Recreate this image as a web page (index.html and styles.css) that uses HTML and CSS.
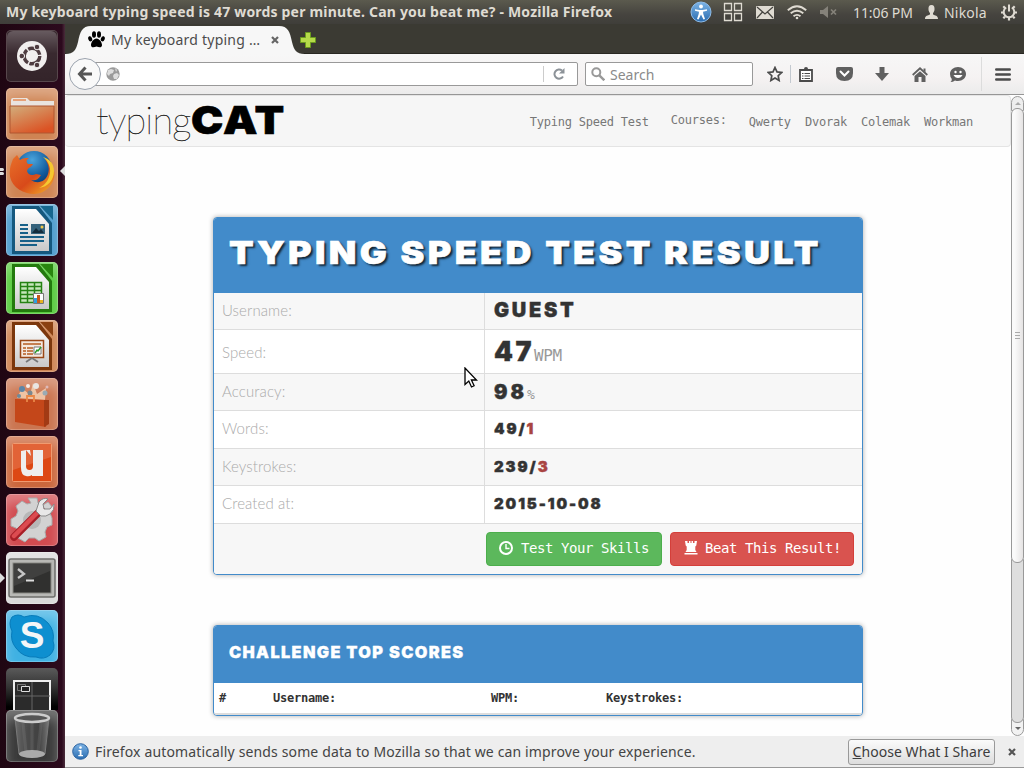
FILE: index.html
```html
<!DOCTYPE html>
<html lang="en">
<head>
<meta charset="utf-8">
<title>My keyboard typing speed is 47 words per minute. Can you beat me?</title>
<link rel="stylesheet" href="styles.css">
</head>
<body>
<svg width="0" height="0" class="defs">
  <defs>
    <linearGradient id="gloss" x1="0" y1="0" x2="0" y2="1"><stop offset="0" stop-color="#fff" stop-opacity=".5"/><stop offset=".45" stop-color="#fff" stop-opacity=".05"/><stop offset="1" stop-color="#fff" stop-opacity="0"/></linearGradient>
    <linearGradient id="folder" x1="0" y1="0" x2=".6" y2="1"><stop offset="0" stop-color="#d2ae7c"/><stop offset="1" stop-color="#db5324"/></linearGradient>
    <linearGradient id="paper" x1="0" y1="0" x2="0" y2="1"><stop offset="0" stop-color="#fff"/><stop offset="1" stop-color="#c9c9c9"/></linearGradient>
    <linearGradient id="glass" x1="0" y1="0" x2="1" y2="0"><stop offset="0" stop-color="#777"/><stop offset=".3" stop-color="#555"/><stop offset=".7" stop-color="#444"/><stop offset="1" stop-color="#888"/></linearGradient>
    <radialGradient id="globe" cx=".45" cy=".25" r=".8"><stop offset="0" stop-color="#4aa4dc"/><stop offset=".6" stop-color="#125a9c"/><stop offset="1" stop-color="#0a2f63"/></radialGradient>
    <linearGradient id="fox" x1="0" y1="0" x2="1" y2="1"><stop offset="0" stop-color="#e8702a"/><stop offset=".55" stop-color="#d84a1a"/><stop offset="1" stop-color="#f5b52a"/></linearGradient>
    <linearGradient id="access" x1="0" y1="0" x2="0" y2="1"><stop offset="0" stop-color="#7db4e6"/><stop offset="1" stop-color="#2a6cb0"/></linearGradient>
  </defs>
</svg>
<div class="desktop">
  <header class="panel-bar">
    <span class="window-title">My keyboard typing speed is 47 words per minute. Can you beat me? - Mozilla Firefox</span>
    <div class="tray">
      <svg width="22" height="22" viewBox="0 0 22 22"><circle cx="11" cy="11" r="10" fill="url(#access)" stroke="#8fbdea"/><circle cx="11" cy="5.500" r="1.900" fill="#fff"/><path d="M5 8.200l4.500.8h3l4.500-.8v1.600l-4 .9.3 2.300 1.700 5-1.500.5-2.500-5-2.500 5-1.500-.5 1.700-5 .3-2.300-4-.9z" fill="#fff"/></svg>
      <svg class="t-grid" width="20" height="20" viewBox="0 0 20 20" fill="none" stroke="#dfdbd2" stroke-width="1.300"><path d="M1.500 1.500h7v7h-7zM11.500 1.500h7v7h-7zM1.500 11.500h7v7h-7zM11.500 11.500h7v7h-7z"/></svg>
      <svg class="t-mail" width="18" height="13" viewBox="0 0 18 13"><rect width="18" height="13" rx="1" fill="#dfdbd2"/><path d="M1 1l8 7 8-7M1 12l5.500-6M17 12l-5.500-6" fill="none" stroke="#45443f" stroke-width="1.200"/></svg>
      <svg class="t-wifi" width="20" height="15" viewBox="0 0 20 15" fill="none" stroke="#dfdbd2" stroke-width="1.900"><path d="M.8 5.300q9.200-8 18.400 0M3.700 8.300q6.300-5 12.600 0M6.500 11.200q3.500-2.600 7 0"/><circle cx="10" cy="13" r="1.300" fill="#dfdbd2" stroke="none"/></svg>
      <svg class="t-mute" width="18" height="12" viewBox="0 0 18 12"><path d="M0 4h3l5-4v12l-5-4H0z" fill="#85827a"/><path d="M11 3.500l5 5m0-5l-5 5" stroke="#85827a" stroke-width="1.700"/></svg>
      <span class="clock">11:06 PM</span>
      <svg class="t-user" width="13" height="14" viewBox="0 0 13 14"><path d="M6.500 0C4 0 3.300 2 3.500 4.500c.1 1.700.8 2.800 1.500 3.500v1.500C3 10.500 0 10.500 0 14h13c0-3.500-3-3.500-5-4.500V8c.7-.7 1.400-1.800 1.500-3.500C9.700 2 9 0 6.500 0z" fill="#dfdbd2"/></svg>
      <span class="user">Nikola</span>
      <svg class="t-gear" width="18" height="18" viewBox="0 0 18 18" fill="none" stroke="#dfdbd2"><path d="M6.200 4.500a5.300 5.300 0 1 0 5.600 0M9 1.500v7" stroke-width="2"/><path d="M3.300 3.300l1.700 1.700M14.700 3.300L13 5M1 9.500h2.500M14.500 9.500H17M3.300 15.300L5 13.600M14.700 15.300L13 13.600M9 14.500V17.500" stroke-width="2.200"/></svg>
    </div>
  </header>

  <div class="workspace">
    <nav class="launcher">
      <div class="tile t-dash"><svg viewBox="0 0 52 52"><rect x="1" y="1" width="50" height="50" rx="6" fill="url(#gloss)" opacity=".5"/><circle cx="26" cy="26" r="15" fill="#f1efee"/><circle cx="26" cy="26" r="7.800" fill="none" stroke="#4e3c40" stroke-width="3.400" stroke-dasharray="14.800 1.500"/><g fill="#4e3c40" stroke="#f1efee" stroke-width="1"><circle cx="15.800" cy="26" r="2.800"/><circle cx="31" cy="17" r="2.800"/><circle cx="31" cy="35" r="2.800"/></g></svg></div>
      <div class="tile t-files"><svg viewBox="0 0 52 52"><path d="M5 42V12q0-2 2-2h14l3 3h24v29z" fill="#e9e4df"/><path d="M7 12h13" stroke="#e58b55" stroke-width="1.500"/><path d="M4 18h44v27H4z" fill="url(#folder)" stroke="#b05730"/></svg></div>
      <div class="tile t-fox"><svg viewBox="0 0 52 52"><circle cx="28" cy="23" r="18" fill="url(#globe)"/><path d="M7 13l4-4 3 5c3-2 5-2 9-2-3 2-3 4-1 6l5 0c-2 4-5 3-6 7 1 4 5 5 9 3l5 1c-3 5-6 6-10 5 7 5 15 1 17-6 2-6 0-10-3-15 8 6 12 14 8 22C42 46 31 50 21 47 9 44 2 34 4 23c.4-4 2-7 3-10z" fill="url(#fox)"/><path d="M37 11c6 5 9 12 6 20-2 6-6 9-10 11 9-1 15-8 15-17 0-7-4-12-11-14z" fill="#f6c830"/></svg></div>
      <div class="tile t-writer"><svg viewBox="0 0 52 52"><path d="M34 2h13v14z" fill="#17678f"/><path d="M6 2h27l13 17v31H6z" fill="#15587e"/><path d="M9 5h21l13 15v27H9z" fill="url(#paper)"/><path d="M14 21h8m-8 4h8m-8 4h8m-8 4h24m-24 4h24m-24 4h17" stroke="#176088" stroke-width="1.800"/><path d="M25 20h14v10H25z" fill="#35627b"/><path d="M26 29l4-5 3 3 2-2 3 4z" fill="#142c3c"/><circle cx="36" cy="23" r="1.500" fill="#f0c84a"/></svg></div>
      <div class="tile t-calc"><svg viewBox="0 0 52 52"><path d="M34 2h13v14z" fill="#29860f"/><path d="M6 2h27l13 17v31H6z" fill="#237a0e"/><path d="M9 5h21l13 15v27H9z" fill="url(#paper)"/><path d="M14 20h21v21H14z" fill="#c5e6ba"/><path d="M14.500 20.500h21v20h-21zM14.500 24.500h21M14.500 28.500h21M14.500 32.500h21M14.500 36.500h21M21.500 20v21M28.500 20v21" fill="none" stroke="#258214" stroke-width="1.500"/><path d="M27.500 31.500h10v10h-10z" fill="#fff" stroke="#777"/><path d="M28 36h3v5h-3z" fill="#2da0e0"/><path d="M31 33h3v8h-3z" fill="#c65a1d"/><path d="M34 38h3v3h-3z" fill="#e6b321"/></svg></div>
      <div class="tile t-impress"><svg viewBox="0 0 52 52"><path d="M34 2h13v14z" fill="#8a4012"/><path d="M6 2h27l13 17v31H6z" fill="#7b370d"/><path d="M9 5h21l13 15v27H9z" fill="url(#paper)"/><path d="M14.500 20.500h23v17h-23z" fill="#f4e8de" stroke="#9a4818" stroke-width="1.500"/><path d="M17 24h18M17 28h3m1 0h6m-10 3h3m1 0h6m-10 3h3m1 0h6" stroke="#b55c22" stroke-width="1.700"/><path d="M28 27h7v7h-7z" fill="#fff" stroke="#777"/><path d="M29 33l2-3 1 1 3-4" fill="none" stroke="#2a9a2a" stroke-width="1.400"/><path d="M26 38l-6 4m6-4l6 4" stroke="#777" stroke-width="1.800"/></svg></div>
      <div class="tile t-store"><svg viewBox="0 0 52 52"><path d="M11 20L16 10l8 7 3-12 4 11 9-6-1 12z" fill="#f7d6b8" opacity=".8"/><circle cx="16" cy="11" r="3" fill="#5c86a8"/><circle cx="30" cy="8" r="3" fill="#e9e6e4"/><circle cx="24" cy="15" r="2.500" fill="#7a8890"/><circle cx="39" cy="15" r="2.500" fill="#9aabb3"/><circle cx="22" cy="8" r="2" fill="#f5eee9"/><circle cx="13" cy="18" r="2" fill="#6c8a9c"/><circle cx="41" cy="9" r="1.500" fill="#dbb"/><path d="M9 21l33 1-2 27-31-5z" fill="#c4471a"/><path d="M38 22h5v24l-5 3z" fill="#a23a14"/><path d="M21 24v-6h7v6" fill="none" stroke="#e98748" stroke-width="1.800"/></svg></div>
      <div class="tile t-one"><svg viewBox="0 0 52 52"><rect x="6.500" y="7.500" width="39" height="38" rx="1" fill="#dd4814" stroke="#f09a70"/><path d="M7 8h38v13L7 34z" fill="#fff" opacity=".15"/><path d="M15 15l5-1 5 6-1-6h-4v16q0 4 3.500 4t3.500-4V14h10v26h-11v-1q-3 2-6 1-5-1-5-8z" fill="#eee"/></svg></div>
      <div class="tile t-settings"><svg viewBox="0 0 52 52"><path d="M22 4h9l1 5 5 2 5-3 5 6-3 5 2 5v7l-5 2-2 5 1 5-7 4-4-3h-6l-4 4-7-4 1-6-3-4-5-2v-7l5-3 2-5-2-5 6-5 5 3 4-1z" fill="#d2d2d2" stroke="#aaa"/><circle cx="26" cy="26" r="9" fill="#b7b7b7"/><path d="M8 43L35 16" stroke="#a71f27" stroke-width="7.500" stroke-linecap="round"/><path d="M8 42L33 17" stroke="#dc4b50" stroke-width="4.500" stroke-linecap="round"/><path d="M30 17l3-9q4-5 9-3l-5 5 1 5 6 0 4-5q1 6-4 10-4 3-9 2z" fill="#e8e8e8" stroke="#888"/></svg></div>
      <div class="tile t-term"><svg viewBox="0 0 52 52"><rect x="3" y="9" width="46" height="38" rx="2" fill="#b8b8b5" stroke="#6d6d6b" stroke-width="1.500"/><rect x="7" y="13" width="38" height="30" fill="#30302f" stroke="#878783"/><path d="M8 14h36v7L8 36z" fill="#fff" opacity=".08"/><path d="M12 19l6 5-6 4" fill="none" stroke="#c6c6c6" stroke-width="2.300"/><path d="M20 30.500h8" stroke="#ddd" stroke-width="2"/></svg></div>
      <div class="tile t-skype"><svg viewBox="0 0 52 52"><path d="M6 7q6-4 12 0 14-5 24 6 7 8 5 18 3 8-3 14-6 5-14 2-13 1-20-9Q4 31 6 21q-4-8 0-14z" fill="#0e8fd0" stroke="#087bb9"/></svg><span>S</span></div>
      <div class="tile t-spaces"><svg viewBox="0 0 52 42"><rect x="8" y="13" width="36" height="40" fill="#2b2b2b" stroke="#eee" stroke-width="2"/><path d="M26 14v28M9 28h35" stroke="#666"/><path d="M11.500 16.500h8v6h-8z" fill="none" stroke="#777"/><path d="M15.500 18.500h8v5h-8z" fill="#222" stroke="#ddd"/></svg></div>
      <div class="tile t-trash"><svg viewBox="0 0 52 52"><path d="M9 8h34l-4 36q-13 6-26 0z" fill="url(#glass)" opacity=".8" stroke="#888"/><path d="M17 13l3 29M26 13v30M35 13l-3 29" stroke="#aaa" opacity=".15" stroke-width="3"/><ellipse cx="26" cy="44" rx="13" ry="4" fill="#aaa"/><ellipse cx="26" cy="8" rx="17" ry="4" fill="#555" stroke="#ccc" stroke-width="2.500"/></svg></div>
      <i class="pip pip-l p1"></i><i class="pip pip-l p2"></i><i class="pip pip-r"></i><i class="pip pip-l p3"></i>
    </nav>

    <main class="browser">
      <div class="tabs">
        <svg class="tab-shape" width="240" height="28" viewBox="0 0 240 28"><path d="M0 28C9 28 11 24 13 16 15 6 17 0 26 0H214C223 0 225 6 227 16 229 24 231 28 240 28z" fill="#f7f7f7"/></svg>
        <div class="tab">
          <svg width="17" height="17" viewBox="0 0 17 17"><path d="M8.500 7.500c3 0 5.500 4 5.500 6.500 0 3-3 2.500-5.500 1.500C6 16.500 3 17 3 14c0-2.500 2.500-6.500 5.500-6.500z"/><ellipse cx="6" cy="3.500" rx="2" ry="3.200"/><ellipse cx="11" cy="3.500" rx="2" ry="3.200"/><ellipse cx="2.200" cy="7.800" rx="1.900" ry="2.700" transform="rotate(-20 2.200 7.800)"/><ellipse cx="14.800" cy="7.800" rx="1.900" ry="2.700" transform="rotate(20 14.800 7.800)"/></svg>
          <span class="tab-title">My keyboard typing …</span>
          <svg class="tab-x" width="8" height="8" viewBox="0 0 8 8"><path d="M1 1l6 6m0-6L1 7" stroke="#666" stroke-width="2.200"/></svg>
        </div>
        <svg class="plus" width="16" height="16" viewBox="0 0 16 16"><path d="M5.500.5h5v5h5v5h-5v5h-5v-5h-5v-5h5z" fill="#b5da4a" stroke="#6b9b1e"/></svg>
      </div>
      <div class="toolbar">
        <div class="back"><svg width="16" height="16" viewBox="0 0 16 16" fill="none" stroke="#555" stroke-width="3"><path d="M8.500 1.500L2.500 8l6 6.500M3 8h12"/></svg></div>
        <div class="url">
          <svg width="14" height="14" viewBox="0 0 14 14"><circle cx="7" cy="7" r="6.700" fill="#9a9a9a"/><path d="M2 3l3-1 3 1-1 3-3 1-1 2-2-2zM8 7l3-1 2 2-2 4-3 0-1-3zM9 1l2 2-1 2z" fill="#ddd"/></svg>
          <svg class="reload" width="12" height="12" viewBox="0 0 12 12"><path d="M10 8.500A4.600 4.600 0 1 1 9 2.500" fill="none" stroke="#8c9298" stroke-width="2"/><path d="M11.500 0v5.500H6z" fill="#8c9298"/></svg>
        </div>
        <div class="search"><svg width="14" height="14" viewBox="0 0 14 14" fill="none" stroke="#999" stroke-width="2"><circle cx="5.300" cy="5.300" r="4"/><path d="M8.300 8.300l5 5" stroke-width="2.400"/></svg><span>Search</span></div>
        <div class="tools">
          <svg class="i-star" width="16" height="16" viewBox="0 0 16 16"><path d="M8 1.500l2 4.400 4.700.6-3.500 3.200.9 4.800L8 12.100l-4.100 2.400.9-4.800L1.300 6.500 6 5.900z" fill="none" stroke="#4b4b4b" stroke-width="1.700"/></svg>
          <i class="sep"></i>
          <svg class="i-list" width="14" height="15" viewBox="0 0 14 15"><path d="M1 3h12v11H1z" fill="#fff" stroke="#4b4b4b" stroke-width="1.800"/><path d="M3 6.500h1.500m1 0H11m-8 2.500h1.500m1 0H11m-8 2.500h1.500m1 0H11" stroke="#4b4b4b" stroke-width="1.200"/><path d="M3.500 3.500q0-1.500 1.500-1.500 0-2 2-2t2 2q1.500 0 1.500 1.500z" fill="#4b4b4b"/></svg>
          <svg class="i-pocket" width="17" height="14" viewBox="0 0 17 14"><path d="M0 2q0-2 2-2h13q2 0 2 2v4q0 8-8.500 8T0 6z" fill="#606060"/><path d="M4.500 4.500l4 4 4-4" fill="none" stroke="#fff" stroke-width="2" stroke-linecap="round"/></svg>
          <svg class="i-down" width="14" height="14" viewBox="0 0 14 14"><path d="M4.500 0h5v6H14l-7 8-7-8h4.500z" fill="#606060"/></svg>
          <svg class="i-home" width="16" height="15" viewBox="0 0 16 15"><path d="M.7 8L8 1.300 15.300 8" fill="none" stroke="#606060" stroke-width="1.800"/><path d="M2.500 9L8 4.200 13.500 9V15H9.500v-5h-3v5h-4zM11.500 1.500h2v4l-2-2z" fill="#606060"/></svg>
          <svg class="i-chat" width="16" height="15" viewBox="0 0 16 15"><path d="M8 0c4.500 0 8 3 8 7s-3.500 7-8 7q-1.500 0-3-.5Q3 15 .5 15q1.500-1 1.300-3Q0 10 0 7c0-4 3.500-7 8-7z" fill="#606060"/><circle cx="5.500" cy="5" r="1.200" fill="#fff"/><circle cx="10.500" cy="5" r="1.200" fill="#fff"/><path d="M3.500 8h9q-1.500 3-4.500 3T3.500 8z" fill="#fff"/></svg>
          <i class="sep tall"></i>
          <svg class="i-menu" width="16" height="13" viewBox="0 0 16 13" stroke="#4b4b4b" stroke-width="2.600" stroke-linecap="round"><path d="M1.300 1.500h13.400M1.300 6.500h13.400M1.300 11.500h13.400"/></svg>
        </div>
      </div>

      <div class="viewport">
        <div class="page">
          <div class="site-nav">
            <div class="brand"><span class="brand-thin">typing</span><b class="brand-fat">CAT</b></div>
            <div class="links"><span>Typing Speed Test</span><span class="courses">Courses:</span><span>Qwerty</span><span>Dvorak</span><span>Colemak</span><span>Workman</span></div>
          </div>
          <section class="card result">
            <h1><span>TYPING SPEED TEST RESULT</span></h1>
            <div class="row r36"><span class="label">Username:</span><div class="value"><b class="v-user">GUEST</b></div></div>
            <div class="row r44 plain"><span class="label l2">Speed:</span><div class="value"><b class="v-speed">47</b><small class="wpm">WPM</small></div></div>
            <div class="row r37"><span class="label">Accuracy:</span><div class="value"><b class="v-acc">98</b><small class="pct">%</small></div></div>
            <div class="row r38 plain"><span class="label">Words:</span><div class="value"><b class="v-num">49/<em>1</em></b></div></div>
            <div class="row r37"><span class="label">Keystrokes:</span><div class="value"><b class="v-num">239/<em>3</em></b></div></div>
            <div class="row r38 plain"><span class="label">Created at:</span><div class="value"><b class="v-num v-date">2015-10-08</b></div></div>
            <div class="actions">
              <a class="btn green"><svg width="14" height="14" viewBox="0 0 14 14" fill="none" stroke="#fff" stroke-width="2"><circle cx="7" cy="7" r="6"/><path d="M7 3v4.500h3.500" stroke-width="1.400"/></svg>Test Your Skills</a>
              <a class="btn red"><svg width="14" height="14" viewBox="0 0 14 14"><path d="M1 0h2.500v2H5V0h1.500v2h1V0H9v2h1.500V0H13l-.7 4.500-1 1V9l1.200 2H1.500L2.700 9V5.500l-1-1zM.5 12h13v1.500H.5z" fill="#fff"/></svg>Beat This Result!</a>
            </div>
          </section>
          <section class="card scores">
            <h2><span>CHALLENGE TOP SCORES</span></h2>
            <div class="thead"><span>#</span><span>Username:</span><span>WPM:</span><span>Keystrokes:</span></div>
          </section>
        </div>
        <div class="scroll"><i class="cap up"></i><i class="thumb"></i><i class="trough"></i><i class="cap down"></i></div>
      </div>

      <footer class="notice">
        <svg width="17" height="17" viewBox="0 0 17 17"><circle cx="8.500" cy="8.500" r="7.800" fill="url(#access)" stroke="#2a62a0"/><circle cx="8.500" cy="4.500" r="1.300" fill="#fff"/><path d="M6.500 7h3v5H11v1.200H6.300V12h1.400V8.200H6.500z" fill="#fff"/></svg>
        <span class="notice-text">Firefox automatically sends some data to Mozilla so that we can improve your experience.</span>
        <button class="share"><span><u>C</u>hoose What I Share</span></button>
        <svg class="notice-x" width="8" height="8" viewBox="0 0 8 8"><path d="M1 1l6 6m0-6L1 7" stroke="#555" stroke-width="2.200"/></svg>
      </footer>
    </main>
  </div>
  <svg class="cursor" width="14" height="22" viewBox="0 0 14 22"><path d="M1 1v16.500l3.800-3.500 2.700 6 2.600-1.200-2.700-5.800H12.500z" fill="#fff" stroke="#000" stroke-width="1.300"/></svg>
</div>
</body>
</html>
```
FILE: styles.css
```css
* { box-sizing: border-box; }
body { margin: 0; width: 1024px; height: 768px; overflow: hidden; font-family: "Noto Sans", "Open Sans", sans-serif; }
svg { display: block; flex: none; }
.defs { position: absolute; }
.desktop { position: relative; width: 1024px; height: 768px; display: flex; flex-direction: column; }
span, b, small { white-space: nowrap; }

.panel-bar { height: 24px; flex: none; display: flex; align-items: center; justify-content: space-between; padding: 0 6px; background: linear-gradient(#5b5a4e, #46443f 60%, #3f3e3a); color: #dfdbd2; }
.window-title { font-size: 14px; font-weight: 700; letter-spacing: .19px; line-height: 24px; }
.tray { display: flex; align-items: center; font-size: 14px; }
.t-grid { margin-left: 11px; }
.t-mail { margin-left: 13px; }
.t-wifi { margin-left: 13px; }
.t-mute { margin-left: 13px; }
.clock { margin-left: 15px; width: 61px; letter-spacing: -.1px; }
.t-user { margin-left: 11px; }
.user { margin-left: 6px; width: 44px; letter-spacing: .2px; }
.t-gear { margin-left: 12px; }

.workspace { flex: 1; display: flex; min-height: 0; }
.launcher { position: relative; width: 65px; flex: none; background: linear-gradient(90deg, #1f0612, #2c0a1d 95%, #4a2c3b); padding: 6px 0 0 6px; display: flex; flex-direction: column; gap: 6px; }
.tile { width: 52px; height: 52px; flex: none; border-radius: 5px; overflow: hidden; position: relative; box-shadow: inset 0 0 0 1px rgba(255,255,255,.22), inset 0 9px 12px rgba(255,255,255,.3); }
.tile svg { width: 100%; height: 100%; }
.t-dash { background: #34242a; box-shadow: inset 0 0 0 1px #57474c; }
.t-files, .t-fox, .t-impress { background: #cf8453; }
.t-writer { background: #4b9bcd; }
.t-calc { background: #57cb3d; }
.t-store { background: #cb7550; }
.t-one { background: #cb673d; }
.t-settings { background: #d14b50; }
.t-term { background: #d9d9d9; }
.t-term svg { margin-top: -2px; }
.t-skype { background: #3fb1e3; }
.t-skype span { position: absolute; inset: 0; font: 700 37px/51px "Liberation Sans", sans-serif; color: #f4f6f7; text-align: center; }
.t-spaces { background: linear-gradient(#5a5a5a, #333 45%, #000 92%); height: 42px; border-radius: 5px 5px 0 0; box-shadow: none; }
.t-trash { background: #3b3b3b; margin-top: -6px; }
.pip { position: absolute; border: 5px solid transparent; }
.pip-l { left: 0; border-left-color: #ddd; border-right-width: 0; }
.pip-r { right: 0; top: 142px; border-right-color: #ddd; border-left-width: 0; }
.p1, .p2 { border: 0; width: 4px; height: 3px; background: #ddd; border-radius: 0 2px 2px 0; }
.p1 { top: 144px; } .p2 { top: 148px; } .p3 { top: 549px; }

.browser { flex: 1; display: flex; flex-direction: column; min-width: 0; }
.tabs { height: 30px; flex: none; position: relative; background: #3b3a33; border-bottom: 1px solid #292822; display: flex; align-items: center; }
.tab-shape { position: absolute; left: 0; bottom: -1px; }
.tab { position: relative; width: 240px; display: flex; align-items: center; padding: 2px 0 0 23px; }
.tab-title { margin-left: 6px; width: 152px; font-size: 14px; letter-spacing: .22px; color: #4c4c4c; }
.tab-x { margin-left: 8px; }
.plus { margin: 2px 0 0 -5px; position: relative; }
.toolbar { height: 41px; flex: none; background: linear-gradient(#f7f7f7, #f5f2f2 60%, #ebebeb); border-bottom: 1px solid #969696; display: flex; align-items: center; padding: 0 13px 0 4px; }
.back { width: 32px; height: 32px; flex: none; border: 1px solid #9ba3ae; border-radius: 50%; background: #f9f9f9; display: flex; align-items: center; justify-content: center; z-index: 1; }
.url { width: 486px; flex: none; height: 24px; margin-left: -9px; border: 1px solid #999; border-radius: 0 2px 2px 0; display: flex; align-items: center; justify-content: space-between; padding: 0 12px 0 13px; background: linear-gradient(#ccc, #ccc) 450px 3px/1px 16px no-repeat #fff; }
.search { width: 168px; flex: none; height: 24px; margin-left: 7px; background: #fff; border: 1px solid #999; border-radius: 2px; display: flex; align-items: center; gap: 5px; padding-left: 5px; font-size: 14px; color: #8a8a8a; }
.tools { flex: 1; display: flex; align-items: center; margin-left: 14px; }
.sep { width: 1px; height: 18px; margin-left: 7px; background: #c3c9d0; }
.i-list { margin-left: 8px; }
.i-pocket { margin-left: 23px; }
.i-down { margin-left: 22px; }
.i-home { margin-left: 23px; }
.i-chat { margin-left: 22px; }
.tall { height: 34px; margin-left: 15px; background: #dcdcdc; }
.i-menu { margin-left: 13px; }

.viewport { flex: 1; min-height: 0; display: flex; background: #fefefe; z-index: 0; }
.page { flex: 1; display: flex; flex-direction: column; align-items: flex-start; min-width: 0; font-family: "DejaVu Sans Mono", monospace; }
.site-nav { align-self: stretch; height: 52px; background: #f6f6f6; border: 1px solid #e4e4e4; border-left: 0; border-radius: 4px; display: flex; justify-content: space-between; padding: 0 37px 0 31px; }
.brand { display: flex; align-items: baseline; height: 48px; line-height: 46px; }
.brand-thin { font-family: Lato, sans-serif; font-weight: 100; font-size: 38px; width: 95px; color: #111; letter-spacing: -.8px; -webkit-text-stroke: .3px #111; }
.brand-fat { font-family: Inter, sans-serif; font-weight: 900; font-size: 39px; color: #000; letter-spacing: 1px; transform: scaleX(1.11); transform-origin: left; -webkit-text-stroke: .6px #000; }
.links { display: flex; font-size: 12px; letter-spacing: -.22px; line-height: 52px; color: #777; gap: 14px; }
.links .courses { line-height: 48px; margin: 0 8px; }
.card { width: 650px; margin-left: 148px; border: 1px solid #428bca; border-radius: 4px; background: #fff; box-shadow: 0 0 5px rgba(0,0,0,.32); overflow: hidden; }
.result { margin-top: 70px; height: 358px; flex: none; }
h1, h2 { margin: 0; background: #428bca; color: #fff; padding-left: 15px; font-family: Inter, sans-serif; font-weight: 900; }
h1 span, h2 span { display: inline-block; transform-origin: left; }
h1 { height: 75px; font-size: 32px; line-height: 70px; letter-spacing: 3px; text-shadow: 2px 2px 2px rgba(0,0,0,.75); }
h1 span { transform: scaleX(1.12); -webkit-text-stroke: .6px #fff; }
.row { display: flex; background: #f7f7f7; border-bottom: 1px solid #ddd; }
.plain { background: #fff; }
.r36 { height: 37px; } .r44 { height: 44px; } .r37 { height: 37px; } .r38 { height: 38px; }
.label { width: 271px; flex: none; border-right: 1px solid #ddd; padding: 0 0 3px 8px; display: flex; align-items: center; font-family: Lato, sans-serif; font-weight: 300; font-size: 15px; letter-spacing: .1px; color: #aaa; }
.l2 { padding-top: 4px; }
.value { flex: 1; padding-left: 9px; display: flex; align-items: baseline; font-family: Inter, sans-serif; color: #333; }
.value b { font-weight: 900; -webkit-text-stroke: .4px; }
.v-user { font-size: 20px; line-height: 34px; letter-spacing: 2.700px; }
.v-speed { font-size: 27px; line-height: 43px; letter-spacing: 2.500px; }
.v-acc { font-size: 20px; line-height: 37px; letter-spacing: 3px; }
.v-num { font-size: 15px; line-height: 36px; letter-spacing: 1.900px; }
.value em { font-style: normal; color: #a94442; }
.wpm, .pct { font-family: "DejaVu Sans Mono", monospace; color: #999; letter-spacing: -.4px; }
.wpm { font-size: 16px; } .pct { font-size: 13px; }
.actions { height: 51px; background: #f7f7f7; display: flex; justify-content: flex-end; gap: 8px; padding: 8px 8px 0 0; }
.btn { height: 34px; display: flex; align-items: center; gap: 8px; padding: 0 12px 3px; border: 1px solid #4cae4c; border-radius: 4px; background: #5cb85c; color: #fff; font-size: 14px; letter-spacing: -.43px; white-space: nowrap; }
.green { width: 176px; }
.red { width: 184px; background: #d9534f; border-color: #d43f3a; gap: 7px; padding-left: 13px; }
.scores { margin-top: 50px; height: 91px; flex: none; }
h2 { height: 57px; font-size: 15.500px; line-height: 54px; letter-spacing: 1.300px; }
h2 span { transform: scaleX(1.05); -webkit-text-stroke: .3px #fff; }
.thead { display: grid; grid-template-columns: 54px 218px 115px 1fr; padding-left: 5px; height: 32px; line-height: 30px; border-bottom: 2px solid #ddd; font-size: 12px; font-weight: 700; letter-spacing: -.22px; color: #333; }
.scroll { width: 13px; flex: none; display: flex; flex-direction: column; padding-top: 1px; }
.scroll i { border: 1px solid #999; }
.cap { height: 15px; position: relative; background: #eee; }
.cap::after { content: ""; position: absolute; left: 3px; top: 5px; border: 3px solid transparent; }
.up { border-radius: 7px 7px 0 0; margin-bottom: -3px; }
.up::after { border-bottom-color: #aaa; border-top-width: 0; }
.thumb { height: 455px; border-radius: 6px; background: linear-gradient(90deg, #fafafa 25%, #e6e4e4); position: relative; }
.thumb::after { content: ""; position: absolute; left: 3px; top: 223px; width: 5px; height: 7px; background: repeating-linear-gradient(#aaa 0 1px, transparent 1px 3px); }
.trough { flex: 1; background: #dedede; border-radius: 0 0 6px 6px; margin-top: -4px; z-index: -1; position: relative; }
.down { height: 17px; border-radius: 0 0 7px 7px; margin-top: -4px; z-index: -2; background: #f2f2f2; }
.down::after { top: 7px; border-top-color: #666; border-bottom-width: 0; }

.notice { height: 32px; flex: none; background: #eee; border-bottom: 1px solid #999; display: flex; align-items: center; padding: 0 8px 0 7px; color: #444; font-size: 14px; }
.notice-text { margin-left: 6px; flex: 1; letter-spacing: .14px; }
.share { width: 147px; height: 26px; border: 1px solid #999; border-radius: 3px; background: linear-gradient(#fbfbfb, #ddd); padding: 0; font: 14px/22px "Noto Sans", sans-serif; letter-spacing: .05px; color: #3c3c3c; display: flex; justify-content: center; align-items: center; }
.notice-x { margin-left: 13px; }
.cursor { position: absolute; left: 464px; top: 367px; }
```
